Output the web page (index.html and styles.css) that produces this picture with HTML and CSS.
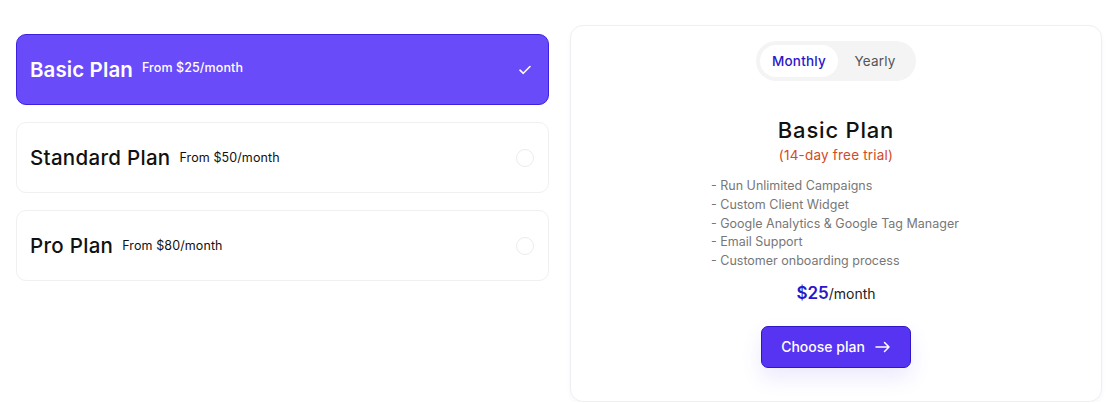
FILE: index.html
```html
<!DOCTYPE html>
<html>
<head>
<meta charset="utf-8">
<title>Choose a plan</title>
<link rel="stylesheet" href="styles.css">
</head>
<body>
<div class="page">
	<div class="plans">
		<div class="plan selected">
			<span class="planName">Basic Plan</span>
			<span class="planPrice">From $25/month</span>
			<span class="check">
				<svg width="12" height="10" viewBox="0 0 12 10"><path d="M1 5.2 L4.3 8.3 L11 1.5" fill="none" stroke="#fff" stroke-width="1.6" stroke-linecap="round" stroke-linejoin="round"/></svg>
			</span>
		</div>
		<div class="plan">
			<span class="planName">Standard Plan</span>
			<span class="planPrice">From $50/month</span>
			<span class="radio"></span>
		</div>
		<div class="plan">
			<span class="planName">Pro Plan</span>
			<span class="planPrice">From $80/month</span>
			<span class="radio"></span>
		</div>
	</div>

	<div class="detail">
		<div class="toggle">
			<span class="tab active">Monthly</span>
			<span class="tab">Yearly</span>
		</div>
		<h2>Basic Plan</h2>
		<div class="trial">(14-day free trial)</div>
		<ul class="features">
			<li>- Run Unlimited Campaigns</li>
			<li>- Custom Client Widget</li>
			<li>- Google Analytics &amp; Google Tag Manager</li>
			<li>- Email Support</li>
			<li>- Customer onboarding process</li>
		</ul>
		<div class="price"><b>$25</b>/month</div>
		<button class="chooseBtn">Choose plan
			<svg width="16" height="12" viewBox="0 0 16 12"><path d="M1 6 H14 M9.5 1.5 L14 6 L9.5 10.5" fill="none" stroke="#fff" stroke-width="1.5" stroke-linecap="round" stroke-linejoin="round"/></svg>
		</button>
	</div>
</div>
</body>
</html>
```

FILE: styles.css
```css
@charset "utf-8";

body{
	margin:0;
	background:#fff;
	font-family:"Inter","Noto Sans",sans-serif;
	color:#111;
}

.page{
	display:flex;
	gap:21px;
	padding:25px 6px 0 16px;
}

/* left column */

.plans{
	width:533px;
	padding-top:9px;
	display:flex;
	flex-direction:column;
	gap:17px;
}

.plan{
	height:71px;
	box-sizing:border-box;
	display:flex;
	align-items:center;
	padding:0 14px 0 13px;
	border:1px solid #f0f0f0;
	border-radius:10px;
	background:#fff;
}

.plan.selected{
	background:#6a4bfa;
	border-color:#3b22e0;
	color:#fff;
}

.planName{
	font-size:20.5px;
	font-weight:500;
	letter-spacing:0.3px;
}

.selected .planName{
	font-weight:600;
	letter-spacing:0.1px;
}

.planPrice{
	font-size:12.5px;
	margin-left:9px;
	margin-top:-1px;
	letter-spacing:0.1px;
}

.selected .planPrice{
	font-weight:500;
	margin-top:-4px;
}

.check, .radio{
	margin-left:auto;
	width:18px;
	height:18px;
	box-sizing:border-box;
	display:flex;
	align-items:center;
	justify-content:center;
}

.radio{
	border:1.5px solid #ececec;
	border-radius:50%;
}

/* right panel */

.detail{
	width:532px;
	height:377px;
	box-sizing:border-box;
	border:1px solid #efeff3;
	border-radius:13px;
	box-shadow:0 2px 4px rgba(120,110,200,0.06);
	display:flex;
	flex-direction:column;
	align-items:center;
	padding-top:15px;
}

.toggle{
	display:flex;
	background:#f4f4f4;
	border-radius:20px;
	padding:4px;
	width:160px;
	height:40px;
	box-sizing:border-box;
}

.tab{
	flex:1;
	display:flex;
	align-items:center;
	justify-content:center;
	font-size:13.5px;
	color:#555;
	border-radius:16px;
	letter-spacing:0.2px;
}

.tab.active{
	background:#fff;
	color:#2a17c9;
	font-weight:500;
	flex:0 0 78px;
}

h2{
	margin:36px 0 0;
	font-size:22px;
	font-weight:500;
	letter-spacing:0.8px;
	color:#111;
}

.trial{
	color:#d24a26;
	font-size:13.5px;
	margin-top:4px;
	letter-spacing:0.2px;
}

.features{
	list-style:none;
	margin:14px 0 0;
	padding:0;
	align-self:flex-start;
	margin-left:140px;
	font-size:12.5px;
	line-height:18.8px;
	color:#777;
}

.price{
	margin-top:12px;
	font-size:14px;
	color:#222;
}

.price b{
	color:#2a17c9;
	font-size:17px;
	font-weight:600;
}

.chooseBtn{
	margin-top:23px;
	width:150px;
	height:42px;
	background:#5634f2;
	border:1px solid #2f17c8;
	border-radius:7px;
	color:#fff;
	font-family:inherit;
	font-size:14px;
	font-weight:500;
	display:flex;
	align-items:center;
	justify-content:center;
	gap:10px;
	box-shadow:0 10px 20px rgba(100,80,240,0.12);
	cursor:pointer;
}
```
